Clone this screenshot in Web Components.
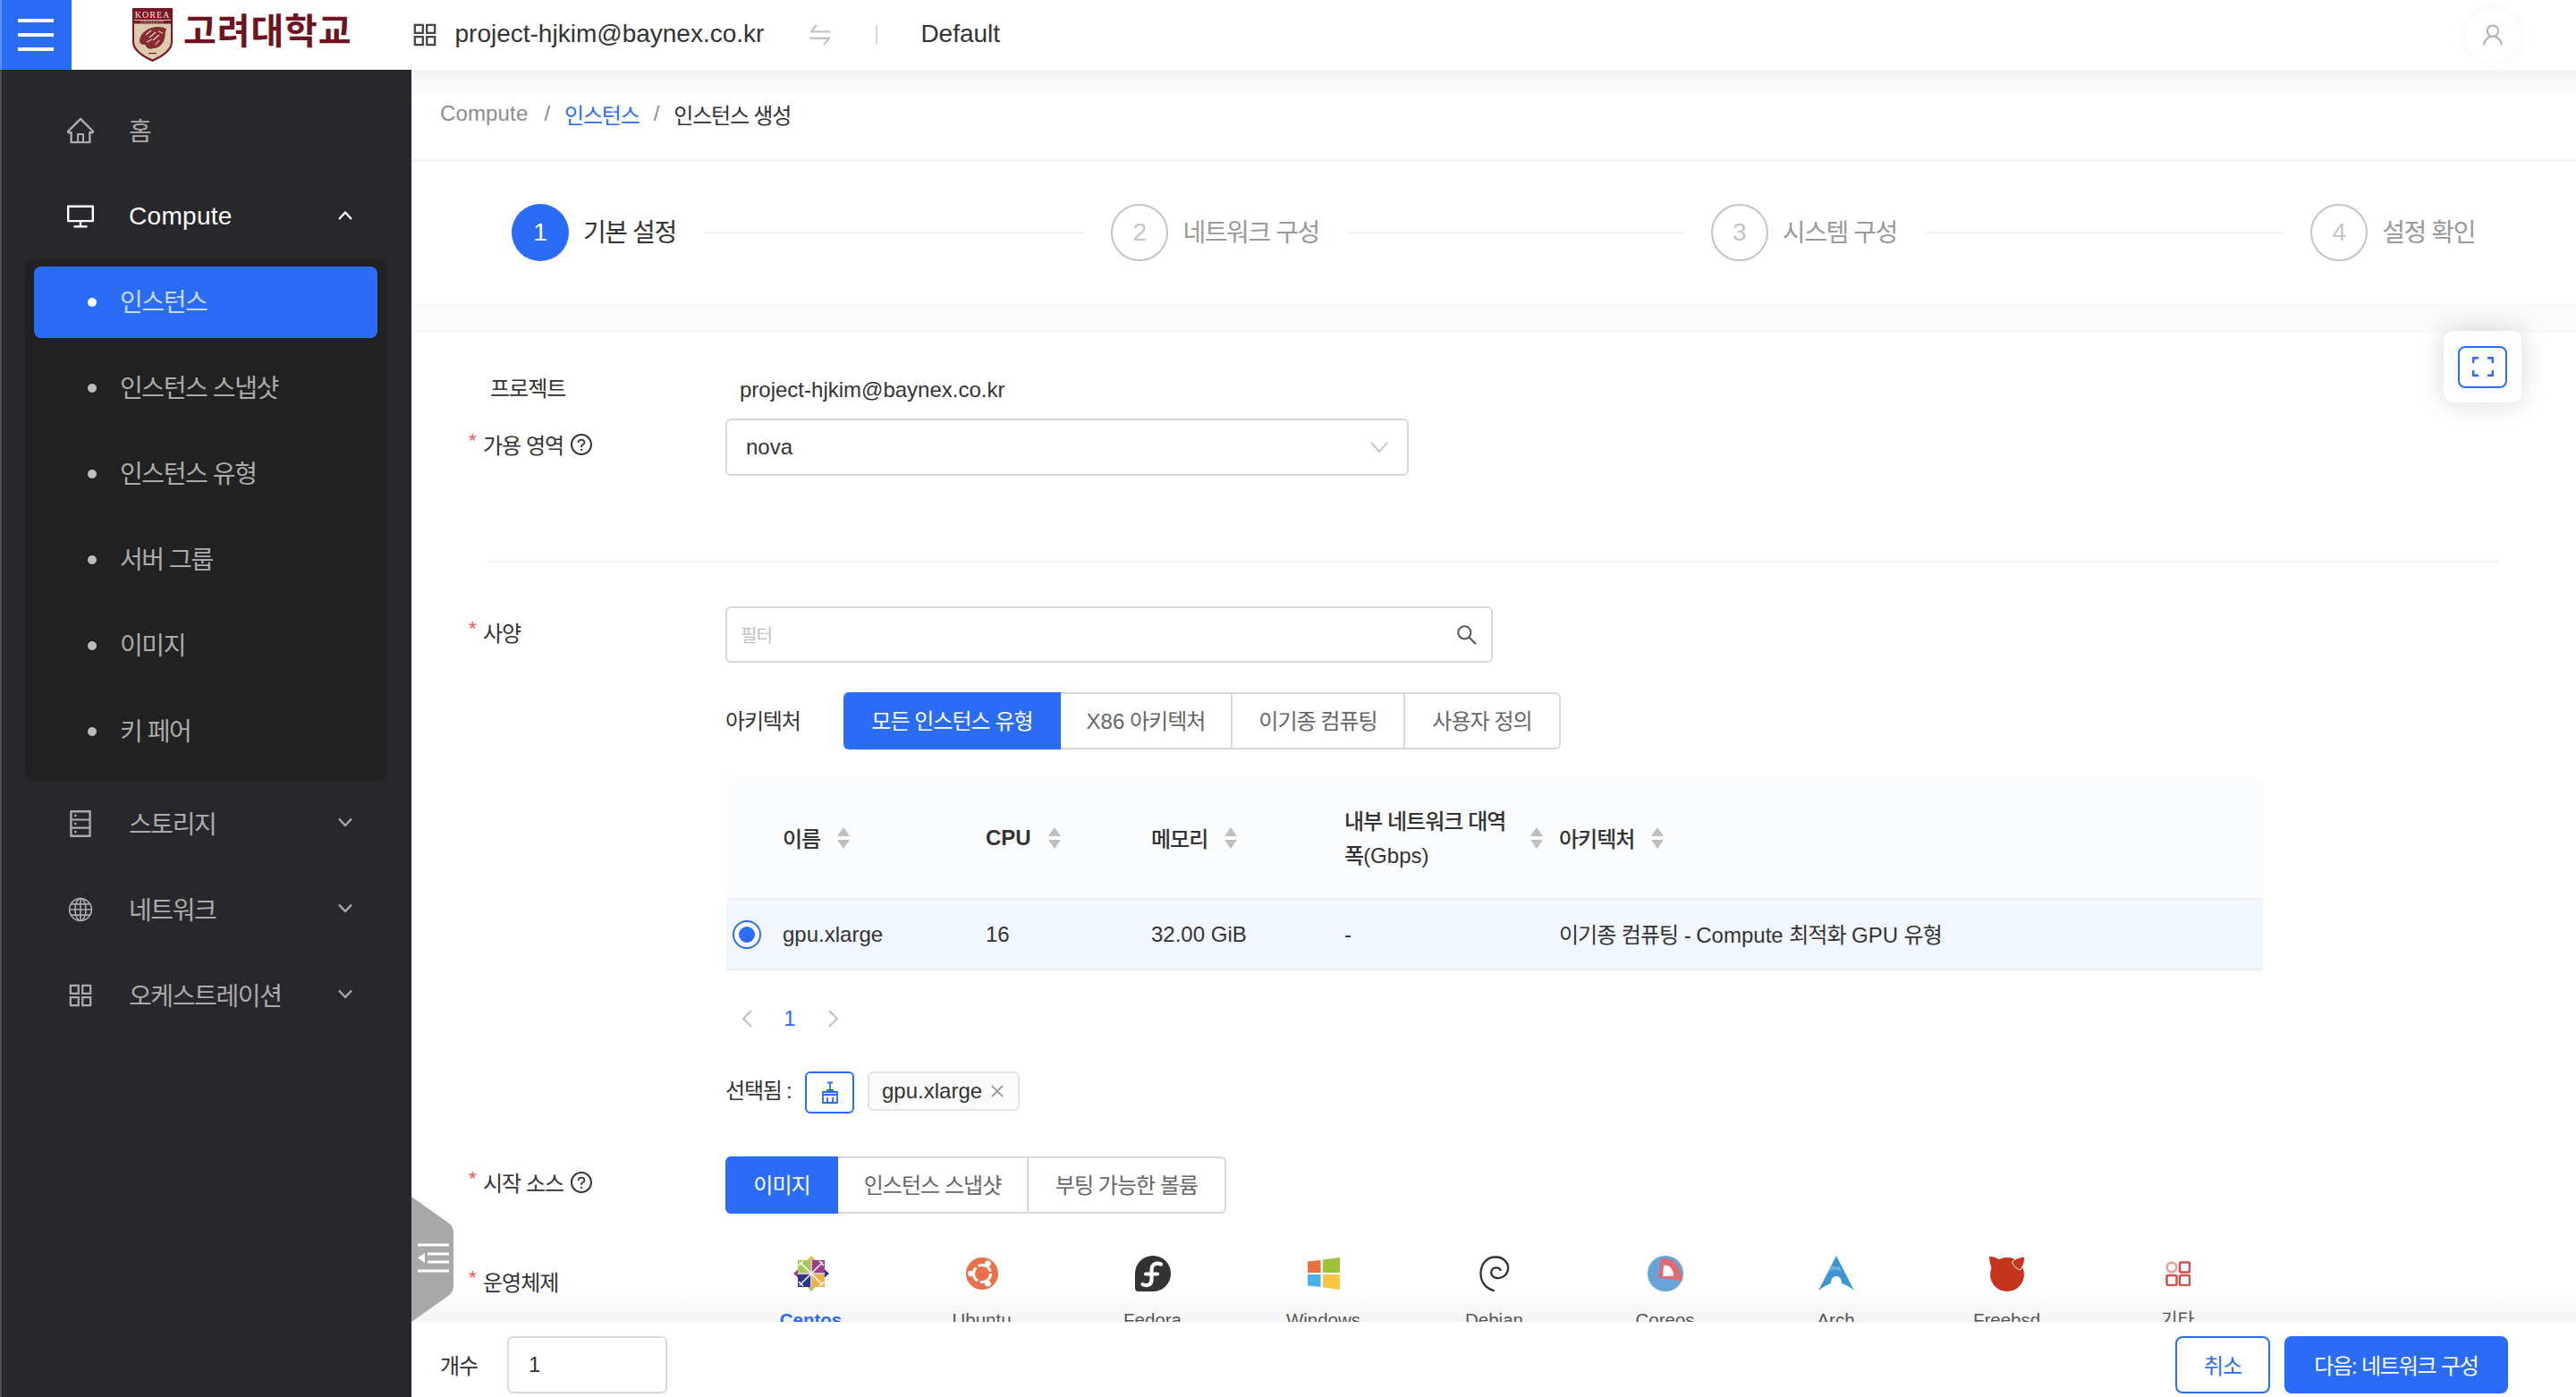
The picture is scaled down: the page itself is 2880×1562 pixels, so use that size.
<!DOCTYPE html>
<html lang="ko"><head><meta charset="utf-8"><title>인스턴스 생성</title>
<style>
html,body{margin:0;padding:0;width:2880px;height:1562px;overflow:hidden;background:#fff;color:#333;font-family:"Liberation Sans","Noto Sans CJK KR",sans-serif;font-size:24px}
</style></head><body>
<x-app>
  <x-topbar slot="top"></x-topbar>
  <x-side-nav slot="nav">
    <x-nav-item icon="home" label="홈"></x-nav-item>
    <x-nav-item icon="desktop" label="Compute" chevron="up" current style="margin-bottom:8px"></x-nav-item>
    <x-sub-menu>
      <x-sub-item label="인스턴스" active></x-sub-item>
      <x-sub-item label="인스턴스 스냅샷"></x-sub-item>
      <x-sub-item label="인스턴스 유형"></x-sub-item>
      <x-sub-item label="서버 그룹"></x-sub-item>
      <x-sub-item label="이미지"></x-sub-item>
      <x-sub-item label="키 페어"></x-sub-item>
    </x-sub-menu>
    <x-nav-item icon="database" label="스토리지" chevron="down"></x-nav-item>
    <x-nav-item icon="global" label="네트워크" chevron="down"></x-nav-item>
    <x-nav-item icon="appstore" label="오케스트레이션" chevron="down"></x-nav-item>
  </x-side-nav>
  <x-main slot="main">
    <x-crumbs></x-crumbs>
    <x-steps>
      <x-step num="1" label="기본 설정" active></x-step>
      <x-step num="2" label="네트워크 구성"></x-step>
      <x-step num="3" label="시스템 구성"></x-step>
      <x-step num="4" label="설정 확인" last></x-step>
    </x-steps>
    <x-band></x-band>
    <x-fade></x-fade>
    <x-form>
      <x-field label="프로젝트" plain style="margin-top:44px;--row:40px"><x-text value="project-hjkim@baynex.co.kr"></x-text></x-field>
      <x-field label="가용 영역" required help style="margin-top:12px"><x-select value="nova"></x-select></x-field>
      <x-rule></x-rule>
      <x-field label="사양" required>
        <x-search placeholder="필터"></x-search>
        <x-arch-row></x-arch-row>
        <x-flavor-table></x-flavor-table>
        <x-pager></x-pager>
        <x-selected value="gpu.xlarge"></x-selected>
      </x-field>
      <x-field label="시작 소스" required help style="margin-top:48px"><x-seg items="이미지|인스턴스 스냅샷|부팅 가능한 볼륨" widths="126,213,221"></x-seg></x-field>
      <x-field label="운영체제" required style="margin-top:45px;--row:68px"><x-os-picker></x-os-picker></x-field>
    </x-form>
    <x-expand></x-expand>
    <x-handle></x-handle>
    <x-footer slot="foot"></x-footer>
  </x-main>
</x-app>
<script>
const P={
home:'M946.5 505L560.1 118.8l-25.9-25.9a31.5 31.5 0 0 0-44.4 0L77.5 505a63.9 63.9 0 0 0-18.8 46c.4 35.2 29.7 63.3 64.9 63.3h42.5V940h691.8V614.3h43.4c17.1 0 33.2-6.7 45.3-18.8a63.6 63.6 0 0 0 18.7-45.3c0-17-6.7-33.1-18.8-45.2zM568 868H456V664h112v204zm217.9-325.7V868H632V640c0-22.1-17.9-40-40-40H432c-22.1 0-40 17.9-40 40v228H238.1V542.3h-96l370-369.7 23.1 23.1L882 542.3h-96.1z',
desktop:'M928 140H96c-17.7 0-32 14.3-32 32v496c0 17.7 14.3 32 32 32h380v112H304c-8.8 0-16 7.2-16 16v48c0 4.4 3.6 8 8 8h432c4.4 0 8-3.6 8-8v-48c0-8.8-7.2-16-16-16H548V700h380c17.7 0 32-14.3 32-32V172c0-17.7-14.3-32-32-32zm-40 488H136V212h752v416z',
database:'M832 64H192c-17.7 0-32 14.3-32 32v832c0 17.7 14.3 32 32 32h640c17.7 0 32-14.3 32-32V96c0-17.7-14.3-32-32-32zm-600 72h560v208H232V136zm560 480H232V408h560v208zm0 272H232V680h560v208zM304 240a40 40 0 1 0 80 0 40 40 0 1 0-80 0zm0 272a40 40 0 1 0 80 0 40 40 0 1 0-80 0zm0 272a40 40 0 1 0 80 0 40 40 0 1 0-80 0z',
appstore:'M464 144H160c-8.8 0-16 7.2-16 16v304c0 8.8 7.2 16 16 16h304c8.8 0 16-7.2 16-16V160c0-8.8-7.2-16-16-16zm-52 268H212V212h200v200zm452-268H560c-8.8 0-16 7.2-16 16v304c0 8.8 7.2 16 16 16h304c8.8 0 16-7.2 16-16V160c0-8.8-7.2-16-16-16zm-52 268H612V212h200v200zM464 544H160c-8.8 0-16 7.2-16 16v304c0 8.8 7.2 16 16 16h304c8.8 0 16-7.2 16-16V560c0-8.8-7.2-16-16-16zm-52 268H212V612h200v200zm452-268H560c-8.8 0-16 7.2-16 16v304c0 8.8 7.2 16 16 16h304c8.8 0 16-7.2 16-16V560c0-8.8-7.2-16-16-16zm-52 268H612V612h200v200z',
swap:'M847.9 592H152c-4.4 0-8 3.6-8 8v60c0 4.4 3.6 8 8 8h605.2L612.9 851c-4.1 5.2-.4 13 6.3 13h72.5c4.9 0 9.5-2.2 12.6-6.1l168.8-214.1c16.5-21 1.6-51.8-25.2-51.8zM872 356H266.8l144.3-183c4.1-5.2.4-13-6.3-13h-72.5c-4.9 0-9.5 2.2-12.6 6.1L150.9 380.2c-16.5 21-1.6 51.8 25.1 51.8h696c4.4 0 8-3.6 8-8v-60c0-4.4-3.6-8-8-8z',
user:'M858.5 763.6a374 374 0 0 0-80.6-119.5 375.63 375.63 0 0 0-119.5-80.6c-.4-.2-.8-.3-1.2-.5C719.5 518 760 444.7 760 362c0-137-111-248-248-248S264 225 264 362c0 82.7 40.5 156 102.8 201.1-.4.2-.8.3-1.2.5-44.8 18.9-85 46-119.5 80.6a375.63 375.63 0 0 0-80.6 119.5A371.7 371.7 0 0 0 136 901.8a8 8 0 0 0 8 8.2h60c4.4 0 7.9-3.5 8-7.8 2-77.2 33-149.5 87.8-204.3 56.7-56.7 132-87.9 212.2-87.9s155.5 31.2 212.2 87.9C779 752.7 810 825 812 902.2c.1 4.4 3.6 7.8 8 7.8h60a8 8 0 0 0 8-8.2c-1-47.8-10.9-94.3-29.5-138.2zM512 534c-45.9 0-89.1-17.9-121.6-50.4S340 407.9 340 362c0-45.9 17.9-89.1 50.4-121.6S466.1 190 512 190s89.1 17.9 121.6 50.4S684 316.1 684 362c0 45.9-17.9 89.1-50.4 121.6S557.9 534 512 534z',
search:'M909.6 854.5L649.9 594.8C690.2 542.7 712 479 712 412c0-80.2-31.3-155.4-87.9-212.1-56.6-56.7-132-87.9-212.1-87.9s-155.5 31.3-212.1 87.9C143.2 256.5 112 331.8 112 412c0 80.1 31.3 155.5 87.9 212.1C256.5 680.8 331.8 712 412 712c67 0 130.6-21.8 182.7-62l259.7 259.6a8.2 8.2 0 0 0 11.6 0l43.6-43.5a8.2 8.2 0 0 0 0-11.6zM570.4 570.4C528 612.7 471.8 636 412 636s-116-23.3-158.4-65.6C211.3 528 188 471.8 188 412s23.3-116.1 65.6-158.4C296 211.3 352.2 188 412 188s116.1 23.2 158.4 65.6S636 352.2 636 412s-23.3 116.1-65.6 158.4z',
help:'M512 64C264.6 64 64 264.6 64 512s200.6 448 448 448 448-200.6 448-448S759.4 64 512 64zm0 820c-205.4 0-372-166.6-372-372s166.6-372 372-372 372 166.6 372 372-166.6 372-372 372zM623.6 316.7C593.6 290.4 554 276 512 276s-81.6 14.5-111.6 40.7C369.2 344 352 380.7 352 420v7.6c0 4.4 3.6 8 8 8h48c4.4 0 8-3.6 8-8V420c0-44.1 43.1-80 96-80s96 35.9 96 80c0 31.1-22 59.6-56.1 72.7-21.2 8.1-39.2 22.3-52.1 40.9-13.1 19-19.9 41.8-19.9 64.9V620c0 4.4 3.6 8 8 8h48c4.4 0 8-3.6 8-8v-22.7a48.3 48.3 0 0 1 30.9-44.8c59-22.7 97.1-74.7 97.1-132.5.1-39.3-17.1-76-48.3-103.3zM472 732a40 40 0 1 0 80 0 40 40 0 1 0-80 0z'
};
function svg(name,extra=''){
  if(name==='global') return `<svg viewBox="0 0 32 32" fill="none" stroke="currentColor" stroke-width="1.8" ${extra}><circle cx="16" cy="16" r="13.2"/><ellipse cx="16" cy="16" rx="6.4" ry="13.2"/><path d="M16 2.8v26.4M2.8 16h26.4M4.6 9.4h22.8M4.6 22.6h22.8"/></svg>`;
  return `<svg viewBox="64 64 896 896" fill="currentColor" ${extra}><path d="${P[name]}"/></svg>`;
}
function def(tag,render){customElements.define(tag,class extends HTMLElement{connectedCallback(){if(this.shadowRoot)return;this.attachShadow({mode:'open'}).innerHTML=render(this)}})}
const chev=(d,c='currentColor',sw=2.4)=>`<svg width="18" height="12" viewBox="0 0 18 12" fill="none" stroke="${c}" stroke-width="${sw}" stroke-linejoin="round">${d==='up'?'<path d="M2 10L9 2.500l7 7.500"/>':'<path d="M2 2.500l7 7.500 7-7.500"/>'}</svg>`;

def('x-app',()=>`<style>:host{display:grid;grid-template:78px 1484px/460px 2420px;width:2880px;height:1562px}
.t{grid-column:1/3}</style><div class="t"><slot name="top"></slot></div><slot name="nav"></slot><slot name="main"></slot>`);

def('x-topbar',()=>`<style>
:host{display:flex;align-items:center;height:78px;background:#fff;color:#333;font-size:28px}
.burger{height:78px;background:#2a6cf6;border-left:2px solid #5a8ff8;display:flex;flex-direction:column;justify-content:center;gap:12px;padding-left:18px;width:60px}
.burger i{display:block;width:40px;height:4px;background:#fff}
.logo{display:flex;align-items:center;margin-left:68px;gap:12px}
.name{font-weight:700;font-size:40px;color:#6e1420;line-height:50px;margin-top:-8px;letter-spacing:.9px;white-space:nowrap}
.proj{display:flex;align-items:center;margin-left:66px}
.proj svg{width:30px;height:30px;color:#444}
.mail{margin-left:19px;margin-top:-2px}
.proj .swap{width:28px;height:28px;color:#c4c4c4;margin-left:49px}
.div{width:2px;height:22px;background:#d9d9d9;margin-left:48px}
.def{margin-left:48px;margin-top:-2px}
.sp{flex:1}
.av{width:62px;height:60px;border-radius:50%;background:#fff;box-shadow:0 0 14px rgba(0,0,0,.05);display:flex;align-items:center;justify-content:center;margin-right:62px}
.av svg{width:26px;height:26px;color:#b5b5b5}
</style>
<div class="burger"><i></i><i></i><i></i></div>
<div class="logo">
<svg width="45" height="60" viewBox="0 0 45 60"><path d="M0 0H45V38Q45 50 22.500 60 0 50 0 38Z" fill="#7a1526"/><path d="M2 17.500H43V37.500Q43 48.500 22.500 57.500 2 48.500 2 37.500Z" fill="#dccaad"/><rect x="2" y="13" width="41" height="1" fill="#d8c6a8"/><text x="22.500" y="11" text-anchor="middle" font-family="Liberation Serif" font-size="10" letter-spacing="1" fill="#f4e9d6">KOREA</text><text x="22.500" y="16.600" text-anchor="middle" font-family="Liberation Serif" font-size="3.400" letter-spacing=".6" fill="#e8d9c0">UNIVERSITY</text><path d="M8 36C9 29 15 23 24 21.500 30 20.500 36 21.500 38 23.500 36 27 37.500 33 34.500 38 31.500 43 27 45.500 23 45 19 47 15 44 14.500 41 11 41.500 7.500 39.500 8 36Z" fill="#8a2a35"/><path d="M15 30l6-5M19 33l7-6M23 36l7-6M29 26l5 2M16 38l6-3M26 41l4-5" stroke="#e6d6bc" stroke-width="1.200"/><rect x="18" y="50" width="9" height="1.200" fill="#7a1526"/></svg>
<span class="name">고려대학교</span></div>
<div class="proj">${svg('appstore')}<span class="mail">project-hjkim@baynex.co.kr</span>${svg('swap','class="swap"')}<span class="div"></span><span class="def">Default</span></div>
<span class="sp"></span><div class="av">${svg('user')}</div>`);

def('x-side-nav',()=>`<style>:host{display:block;background:#27272c;border-left:2px solid #4e4e54;box-sizing:border-box;padding:28px 0 0 36px;height:1484px;width:460px}</style><slot></slot>`);

def('x-nav-item',e=>{const ch=e.getAttribute('chevron');const cur=e.hasAttribute('current');const lat=/^[A-Z]/.test(e.getAttribute('label'));return `<style>
:host{display:flex;align-items:center;width:384px;height:80px;margin-bottom:16px;font-size:28px;color:${cur?'#fff':'#ababab'};letter-spacing:-.05em}
.i{width:30px;height:30px;margin-left:37px;flex:none}
.i svg{display:block;width:30px;height:30px}
.l{margin-left:39px;flex:1;${lat?'letter-spacing:.3px;margin-top:0':'margin-top:-3px'}}
.c{margin-right:27px;display:flex;margin-top:${ch==='up'?-2:-4}px}
</style><span class="i">${svg(e.getAttribute('icon'))}</span><span class="l">${e.getAttribute('label')}</span>${ch?`<span class="c">${chev(ch)}</span>`:''}`});

def('x-sub-menu',()=>`<style>:host{display:block;width:404px;margin:0 0 8px -10px;box-sizing:border-box;padding:8px 10px 15px;background:#212121;border-radius:8px}</style><slot></slot>`);

def('x-sub-item',e=>{const a=e.hasAttribute('active');return `<style>
:host{display:flex;align-items:center;height:80px;margin-bottom:16px;border-radius:8px;padding-left:60px;font-size:28px;letter-spacing:-.05em;color:${a?'#c5d8fd':'#ababab'};background:${a?'#2a6cf6':'transparent'}}
:host(:last-child){margin-bottom:0}
i{width:10px;height:10px;border-radius:50%;background:${a?'#fff':'#bdbdbd'};margin-right:26px;flex:none}
span{margin-top:-4px}
</style><i></i><span>${e.getAttribute('label')}</span>`});

def('x-main',()=>`<style>:host{display:flex;flex-direction:column;position:relative;height:1484px;width:2420px;overflow:hidden}
.scroll{height:1400px;overflow:hidden;flex:none;position:relative}
</style><div class="scroll"><slot></slot></div><slot name="foot"></slot>`);

def('x-crumbs',()=>`<style>:host{display:flex;align-items:center;height:100px;border-bottom:2px solid #f0f0f0;padding:0 0 0 32px;background:linear-gradient(#f3f3f3,#fff 34px);font-size:24px;letter-spacing:-.05em;color:#333}
.m{color:#8c8c8c;letter-spacing:.15px;margin-right:2px}.s{color:#8c8c8c;margin:0 16px;letter-spacing:0}.b{color:#2a6cf6}
div{display:flex;align-items:center;margin-top:-2px}</style><div><span class="m">Compute</span><span class="s">/</span><span class="b">인스턴스</span><span class="s">/</span><span>인스턴스 생성</span></div>`);

def('x-steps',()=>`<style>:host{display:flex;align-items:center;height:160px;padding:0 113px 0 112px}</style><slot></slot>`);

def('x-step',e=>{const a=e.hasAttribute('active'),l=e.hasAttribute('last');return `<style>
:host{display:flex;align-items:center;flex:${l?'none':'1'};font-size:28px;letter-spacing:-.05em;color:${a?'#333':'#999'}}
.n{width:64px;height:64px;border-radius:50%;box-sizing:border-box;display:flex;align-items:center;justify-content:center;font-size:28px;letter-spacing:0;${a?'background:#2a6cf6;color:#fff':'border:2px solid #c4c4c4;color:#c4c4c4'}}
.t{margin-left:16px;white-space:nowrap;margin-top:-4px}
.line{flex:1;height:2px;background:#f0f0f0;margin:0 30px 0 32px;${l?'display:none':''}}
</style><span class="n">${e.getAttribute('num')}</span><span class="t">${e.getAttribute('label')}</span><span class="line"></span>`});

def('x-band',()=>`<style>:host{display:block;height:32px;background:#fafafa}</style>`);
def('x-form',()=>`<style>:host{display:block;position:relative;z-index:1}</style><slot></slot>`);

def('x-field',e=>{const r=e.hasAttribute('required');return `<style>
:host{display:grid;grid-template-columns:351px 1567px;--row:64px}
.lab{display:flex;align-items:center;height:var(--row);padding-left:${r?64:88}px;font-size:24px;letter-spacing:-.04em;color:#333;box-sizing:border-box;margin-top:-4px}
.st{color:#ff4d4f;width:16px;font-size:22px;letter-spacing:0;line-height:1;margin-top:-6px}
.h{width:24px;height:24px;margin-left:8px;color:#333;margin-top:2px}
.h svg{display:block;width:24px;height:24px}
</style><div class="lab">${r?'<span class="st">*</span>':''}<span>${e.getAttribute('label')}</span>${e.hasAttribute('help')?`<span class="h">${svg('help')}</span>`:''}</div><div><slot></slot></div>`});

def('x-text',e=>`<style>:host{display:flex;align-items:center;height:40px;padding-left:16px;font-size:24px;color:#333}</style>${e.getAttribute('value')}`);

def('x-select',e=>`<style>:host{display:flex;align-items:center;justify-content:space-between;box-sizing:border-box;width:764px;height:64px;border:2px solid #d9d9d9;border-radius:6px;padding:0 21px 0 21px;font-size:24px;color:#333}</style><span>${e.getAttribute('value')}</span><svg width="20" height="14" viewBox="0 0 20 14" fill="none" stroke="#bfbfbf" stroke-width="1.800"><path d="M1 2l9 10 9-10"/></svg>`);

def('x-rule',()=>`<style>:host{display:block;height:2px;background:#f0f0f0;margin:95px 87px 49px 87px}</style>`);

def('x-search',e=>`<style>:host{display:flex;align-items:center;justify-content:space-between;box-sizing:border-box;width:858px;height:63px;border:2px solid #d9d9d9;border-radius:6px;padding:0 15px 0 15px;font-size:20px;letter-spacing:-.04em;color:#bfbfbf}
svg{width:24px;height:24px;color:#555}</style><span>${e.getAttribute('placeholder')}</span>${svg('search')}`);

def('x-seg',e=>{const it=e.getAttribute('items').split('|'),w=e.getAttribute('widths').split(',');return `<style>
:host{display:inline-flex;height:64px;font-size:24px;letter-spacing:-.04em;color:#666;vertical-align:top}
div{display:flex;align-items:center;justify-content:center;box-sizing:border-box;height:64px;border:2px solid #d9d9d9;border-left:0;background:#fff;white-space:nowrap;padding-bottom:3px}
div:first-of-type{border:0;background:#2a6cf6;color:#fff;border-radius:6px 0 0 6px}
div:last-of-type{border-radius:0 6px 6px 0}
b{font-weight:400;letter-spacing:0}
</style>${it.map((t,i)=>`<div style="width:${w[i]}px"><span>${t.replace(/X86/,'<b>X86</b>')}</span></div>`).join('')}`});

def('x-arch-row',()=>`<style>:host{display:flex;align-items:center;margin-top:33px;height:64px;font-size:24px;letter-spacing:-.05em;color:#333}
.l{width:132px;margin-top:-4px}</style><span class="l">아키텍처</span><x-seg items="모든 인스턴스 유형|X86 아키텍처|이기종 컴퓨팅|사용자 정의" widths="243,192,193,174"></x-seg>`);

const sorter=`<svg class="so" width="16" height="26" viewBox="0 0 16 26" fill="#bfbfbf"><path d="M8 1l7 10H1zM8 25L1 15h14z"/></svg>`;
def('x-flavor-table',()=>`<style>
:host{display:block;width:1718px;margin:32px 0 0 1px;font-size:24px;color:#333}
.r{display:grid;grid-template-columns:63px 227px 185px 216px 240px 1fr;align-items:center}
.h{height:136px;background:#fbfcfe;font-weight:500;letter-spacing:-.04em;border-bottom:2px solid #f0f0f0;box-sizing:border-box}
.b{height:79px;background:#f2f6fe;border-bottom:2px solid #ececec;box-sizing:border-box;letter-spacing:-.04em}
.c{display:flex;align-items:center;gap:18px}
.k{margin-top:-2px}
.kk{word-spacing:.8px}
.e{font-weight:700;letter-spacing:0}.l{letter-spacing:0;white-space:nowrap}
.w{width:195px;line-height:38px;font-weight:500;margin-right:12px;margin-top:1px;display:flex;flex-direction:column}
.w span{display:block;white-space:nowrap}
.w .l2{display:flex}
.c.n{gap:0}
.rd{width:32px;height:32px;margin-left:7px;border:2px solid #2a6cf6;border-radius:50%;box-sizing:border-box;background:#fff;display:flex;align-items:center;justify-content:center}
.rd i{width:18px;height:18px;border-radius:50%;background:#2a6cf6}
</style>
<div class="r h"><span></span><div class="c"><span class="k">이름</span>${sorter}</div><div class="c"><span class="e">CPU</span>${sorter}</div><div class="c"><span class="k">메모리</span>${sorter}</div><div class="c n"><div class="w"><span>내부 네트워크 대역</span><span class="l2"><span>폭</span><span class="l">(Gbps)</span></span></div>${sorter}</div><div class="c"><span class="k">아키텍처</span>${sorter}</div></div>
<div class="r b"><span class="rd"><i></i></span><span class="l">gpu.xlarge</span><span class="l">16</span><span class="l">32.00 GiB</span><span class="l">-</span><span class="k kk">이기종 컴퓨팅 - <span class="l">Compute</span> 최적화 <span class="l">GPU</span> 유형</span></div>`);

def('x-pager',()=>`<style>:host{display:flex;align-items:center;height:40px;margin-top:34px;font-size:24px;color:#2a6cf6}
svg{display:block}span{width:22px;text-align:center;margin:0 31px 0 30px}
.a{margin-left:17px}</style><svg class="a" width="14" height="24" viewBox="0 0 14 24" fill="none" stroke="#bfbfbf" stroke-width="2"><path d="M12 3L3 12l9 9"/></svg><span>1</span><svg width="14" height="24" viewBox="0 0 14 24" fill="none" stroke="#bfbfbf" stroke-width="2"><path d="M2 3l9 9-9 9"/></svg>`);

def('x-selected',e=>`<style>:host{display:flex;align-items:flex-start;margin-top:39px;height:47px;font-size:24px;color:#333}
.l{letter-spacing:-.05em;width:89px;line-height:44px}
.btn{width:55px;height:47px;box-sizing:border-box;border:2px solid #2a6cf6;border-radius:6px;display:flex;align-items:center;justify-content:center;color:#2a6cf6}
.tag{display:flex;align-items:center;height:44px;margin-left:15px;box-sizing:border-box;border:2px solid #e3e3e3;border-radius:6px;background:#fafafa;padding:0 12px 0 14px;width:170px}
.tag svg{margin-left:9px}
</style><span class="l">선택됨 :</span><span class="btn"><svg width="24" height="26" viewBox="0 0 24 26" fill="none" stroke="currentColor" stroke-width="1.800"><path d="M12 1v9M9 1.500h6M8 10h8M4 12h16v3H4zM4 15v9h16v-9M9 18v6M15 18v6"/></svg></span><span class="tag">${e.getAttribute('value')}<svg width="16" height="16" viewBox="0 0 16 16" stroke="#8c8c8c" stroke-width="1.600"><path d="M2 2l12 12M14 2L2 14"/></svg></span>`);

const OS=[
['Centos',`<svg width="40" height="40" viewBox="0 0 40 40"><path d="M5 5h14v14H5z" fill="#a8c957"/><path d="M21 5h14v14H21z" fill="#9b3f8d"/><path d="M5 21h14v14H5z" fill="#2f3588"/><path d="M21 21h14v14H21z" fill="#efb14a"/><path d="M20 0l-4.500 5h9z" fill="#efb14a"/><path d="M40 20l-5-4.500v9z" fill="#2f3588"/><path d="M20 40l4.500-5h-9z" fill="#a8c957"/><path d="M0 20l5 4.500v-9z" fill="#9b3f8d"/><path d="M19 5v14H5v2h14v14h2V21h14v-2H21V5z" fill="#d8c4c9"/><path d="M7 7l26 26M33 7L7 33M11 6l-5 5M29 6l5 5M11 34l-5-5M29 34l5-5" stroke="#fff" stroke-width="1.500"/></svg>`],
['Ubuntu',`<svg width="36" height="36" viewBox="0 0 36 36"><circle cx="18" cy="18" r="18" fill="#e9704a"/><circle cx="18" cy="18" r="9.500" fill="none" stroke="#fff" stroke-width="3" stroke-dasharray="17 3"/><circle cx="5.500" cy="18" r="3.300" fill="#fff"/><circle cx="24.500" cy="6.800" r="3.300" fill="#fff"/><circle cx="24.500" cy="29.200" r="3.300" fill="#fff"/></svg>`],
['Fedora',`<svg width="40" height="40" viewBox="0 0 40 40"><path d="M20 0a20 20 0 0 1 0 40H4a4 4 0 0 1-4-4V20A20 20 0 0 1 20 0z" fill="#333"/><path d="M29 9.500C23 7 18.500 10 18.500 16V27C18.500 33 13 34.500 8.500 32M12 20.500h13" fill="none" stroke="#fff" stroke-width="4.200" stroke-linecap="round"/></svg>`],
['Windows',`<svg width="36" height="36" viewBox="0 0 36 36"><path d="M0 4.500L14.500 3v14H0z" fill="#e8703f"/><path d="M17 2.500L36 0v17H17z" fill="#9dc13a"/><path d="M0 19h14.500v14L0 31.500z" fill="#4db1ef"/><path d="M17 19h19v17l-19-2.500z" fill="#f7c744"/></svg>`],
['Debian',`<svg width="34" height="40" viewBox="0 0 34 40" fill="none" stroke="#333" stroke-width="2.300" stroke-linecap="round"><path d="M16 39C6 36 1 28 1.500 19 2 8 9 1.500 18 1.500 27 1.500 33 8 32 15 31 22 25 25.500 19.500 25 14 24.500 12 20 14 16 16 12.500 22 12.500 23.500 16"/></svg>`],
['Coreos',`<svg width="40" height="40" viewBox="0 0 40 40"><circle cx="20" cy="20" r="20" fill="#68a4d8"/><path d="M15 3.500C26 2 37 8 39 28L12 24.500z" fill="#e26a72"/><path d="M18 11C24 10 29 15 29 22.500L17 23z" fill="#fff"/></svg>`],
['Arch',`<svg width="40" height="40" viewBox="0 0 40 40"><path d="M20 0L0 39Q8 33 14 31C14 25 17 23 20 23 23 23 26 25 26 31Q33 33 40 39Z" fill="#3f95d4"/><path d="M14.500 11L11 18Q18 13 26 18L24 12Q20 14 14.500 11z" fill="#6db0e2"/></svg>`],
['Freebsd',`<svg width="40" height="40" viewBox="0 0 40 40"><circle cx="20" cy="21" r="19" fill="#c5341c"/><path d="M0 1Q8 1 13 6 5 8 3 15 0 8 0 1z" fill="#c5341c"/><path d="M40 1Q30 2 25.500 7 28 14 35 16 40 9 40 1z" fill="#c5341c" stroke="#fff" stroke-width="1"/></svg>`],
['기타',`<svg width="28" height="28" viewBox="0 0 28 28" fill="none" stroke-width="2.500"><circle cx="7" cy="7" r="5.300" stroke="#ee9a9a"/><rect x="16" y="1.500" width="11" height="11" rx="1.500" stroke="#cf4f4f"/><rect x="1.500" y="16" width="11" height="11" rx="1.500" stroke="#cf4f4f"/><rect x="16" y="16" width="11" height="11" rx="1.500" stroke="#cf4f4f"/></svg>`]
];
def('x-os-picker',()=>`<style>:host{display:grid;grid-template-columns:repeat(9,191px);margin-left:0;font-size:20.500px;color:#555;text-align:center}
.i{display:flex;flex-direction:column;align-items:center}
.g{height:44px;display:flex;align-items:center;justify-content:center}
.t{margin-top:18px;line-height:24px}
.on .t{color:#2a6cf6;font-weight:700}
</style>${OS.map((o,i)=>`<div class="i ${i?'':'on'}"><span class="g">${o[1]}</span><span class="t">${o[0]}</span></div>`).join('')}`);

def('x-expand',()=>`<style>:host{position:absolute;right:61px;top:292px;z-index:2;width:87px;height:80px;background:#fff;border-radius:10px;box-shadow:0 0 30px rgba(0,0,0,.16);display:flex;align-items:center;justify-content:center}
div{width:55px;height:47px;box-sizing:border-box;border:2px solid #2a6cf6;border-radius:8px;display:flex;align-items:center;justify-content:center}</style><div><svg width="24" height="22" viewBox="0 0 24 22" fill="none" stroke="#2a6cf6" stroke-width="2.400"><path d="M1.200 7V1.200H7M17 1.200h5.800V7M22.800 15v5.800H17M7 20.800H1.200V15"/></svg></div>`);

def('x-fade',()=>`<style>:host{position:absolute;left:0;right:0;top:1362px;height:38px;background:linear-gradient(rgba(244,244,244,0),#f4f4f4);pointer-events:none}</style>`);

def('x-handle',()=>`<style>:host{position:absolute;left:0;top:1260px;z-index:2;width:47px;height:140px}svg{display:block}</style><svg width="47" height="140" viewBox="0 0 47 140"><path d="M0 0L41 29Q47 33 47 40V100Q47 107 41 111L0 140Z" fill="#a8a8a8"/><path d="M7 54h35M7 83h35M18 64h24M18 73h24" stroke="#fff" stroke-width="3"/><path d="M7 68.500l8-5.500v11z" fill="#fff"/></svg>`);

def('x-footer',()=>`<style>:host{display:flex;align-items:center;height:84px;background:#fff;padding:16px 76px 4px 32px;font-size:24px;color:#333;flex:none;box-sizing:border-box}
.l{letter-spacing:-.04em;width:75px;margin-top:-2px}
.in{width:179px;height:64px;box-sizing:border-box;border:2px solid #d9d9d9;border-radius:6px;display:flex;align-items:center;padding-left:22px}
.sp{flex:1}
.bt{height:64px;box-sizing:border-box;border-radius:8px;display:flex;align-items:center;justify-content:center;letter-spacing:-.05em;white-space:nowrap;padding-bottom:2px}
.c{width:106px;border:2px solid #2a6cf6;color:#2a6cf6}
.n{width:250px;background:#2a6cf6;color:#fff;margin-left:16px}
</style><span class="l">개수</span><span class="in">1</span><span class="sp"></span><span class="bt c">취소</span><span class="bt n">다음: 네트워크 구성</span>`);
</script></body></html>
